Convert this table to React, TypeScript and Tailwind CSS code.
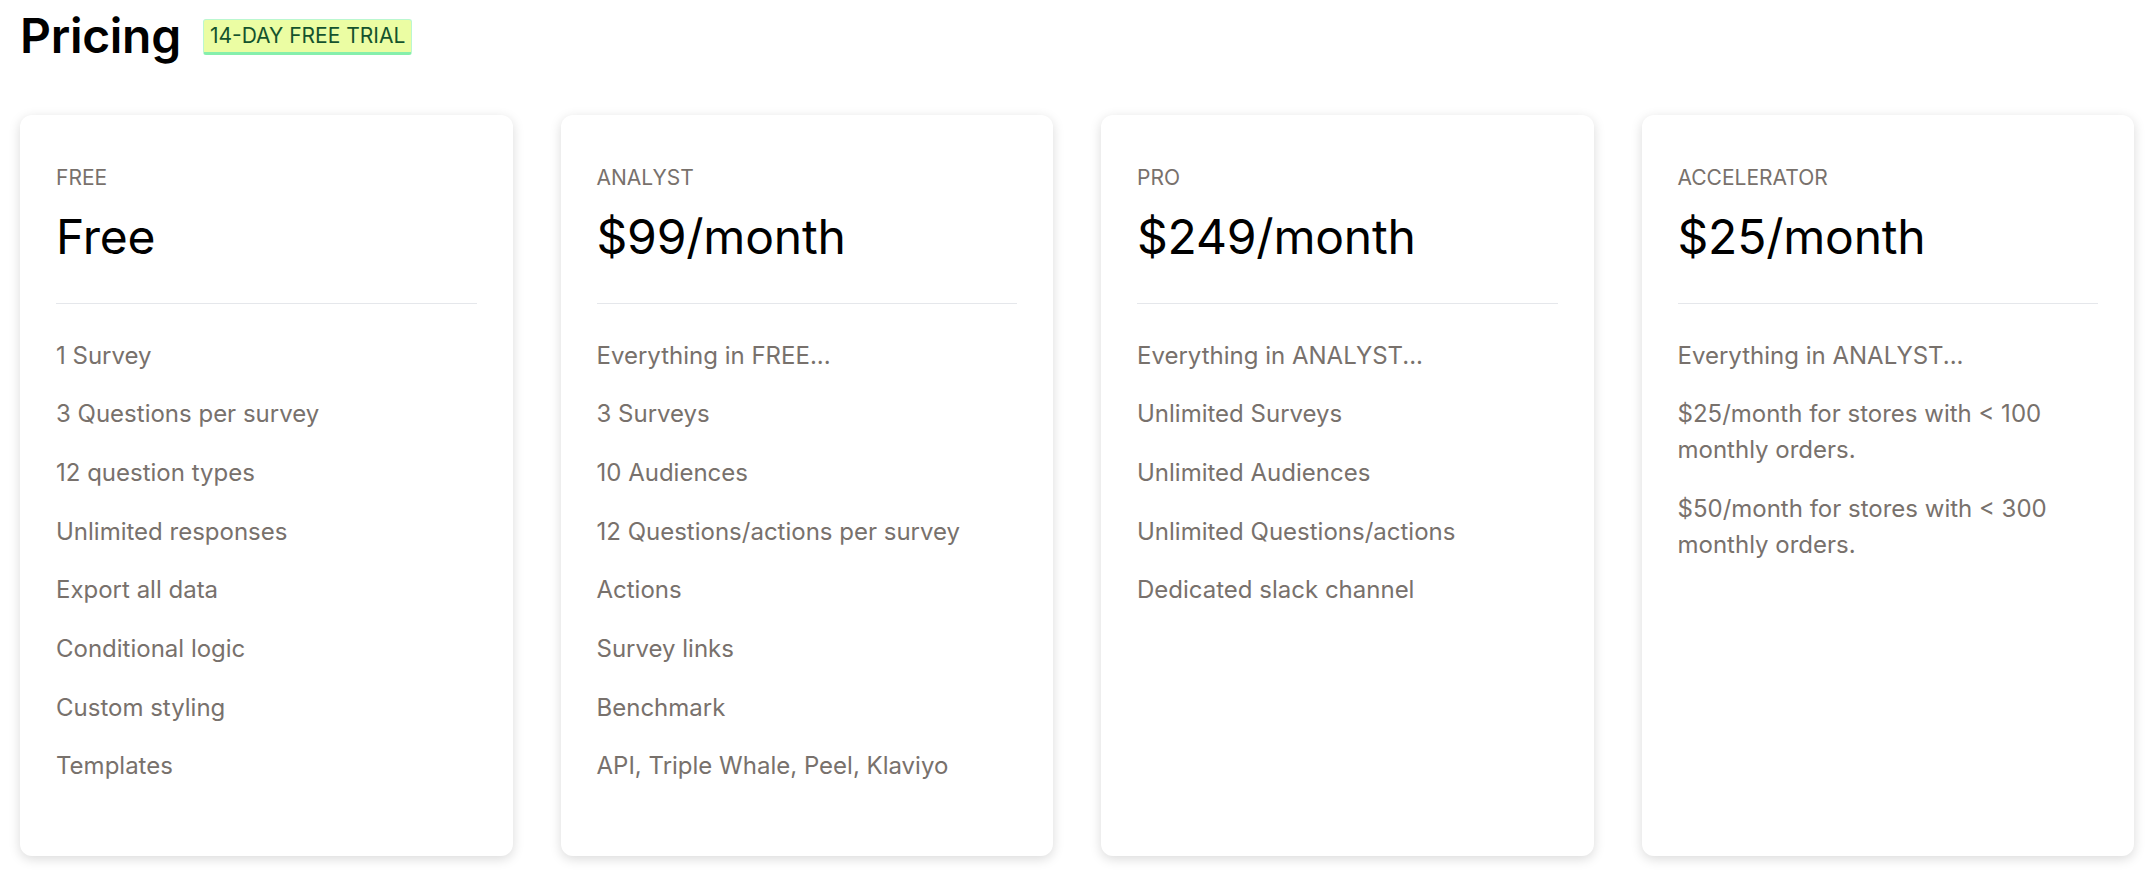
import React from 'react'

type Plan = {
  label: string
  price: string
  features: string[]
}

const plans: Plan[] = [
  {
    label: 'FREE',
    price: 'Free',
    features: [
      '1 Survey',
      '3 Questions per survey',
      '12 question types',
      'Unlimited responses',
      'Export all data',
      'Conditional logic',
      'Custom styling',
      'Templates',
    ],
  },
  {
    label: 'ANALYST',
    price: '$99/month',
    features: [
      'Everything in FREE...',
      '3 Surveys',
      '10 Audiences',
      '12 Questions/actions per survey',
      'Actions',
      'Survey links',
      'Benchmark',
      'API, Triple Whale, Peel, Klaviyo',
    ],
  },
  {
    label: 'PRO',
    price: '$249/month',
    features: [
      'Everything in ANALYST...',
      'Unlimited Surveys',
      'Unlimited Audiences',
      'Unlimited Questions/actions',
      'Dedicated slack channel',
    ],
  },
  {
    label: 'ACCELERATOR',
    price: '$25/month',
    features: [
      'Everything in ANALYST...',
      '$25/month for stores with < 100 monthly orders.',
      '$50/month for stores with < 300 monthly orders.',
    ],
  },
]

function PlanCard({ plan }: { plan: Plan }) {
  return (
    <div className="bg-white rounded-xl shadow-[0_3px_12px_rgba(0,0,0,0.15)] px-9 pt-[47px] pb-[72px]">
      <p className="text-[21px] leading-[31.5px] text-[#78716c]">{plan.label}</p>
      <h2 className="mt-[19px] text-[48px] leading-[48px] font-normal tracking-[-0.2px] text-black">
        {plan.price}
      </h2>
      <div className="mt-[42px] h-px bg-[#e5e7eb]" />
      <ul className="mt-[34px] flex flex-col gap-[22.7px]">
        {plan.features.map((f) => (
          <li key={f} className="text-[24px] leading-[36px] text-[#78716c] pr-8">
            {f}
          </li>
        ))}
      </ul>
    </div>
  )
}

export default function App() {
  return (
    <div
      className="min-h-screen bg-white px-5 pt-3"
      style={{ fontFamily: 'Inter, "Noto Sans", sans-serif' }}
    >
      <div className="flex items-center">
        <h1 className="text-[48px] leading-none font-semibold tracking-[-0.3px] text-black">Pricing</h1>
        <span className="ml-[22px] mt-[2px] rounded-[3px] border border-[#bbf7d0] border-b-[3px] border-b-[#86efac] bg-[#ebfda3] px-[6px] text-[21px] leading-[32px] text-[#14532d]">
          14-DAY FREE TRIAL
        </span>
      </div>
      <div className="mt-[55px] grid grid-cols-4 gap-12">
        {plans.map((p) => (
          <PlanCard key={p.label} plan={p} />
        ))}
      </div>
    </div>
  )
}
